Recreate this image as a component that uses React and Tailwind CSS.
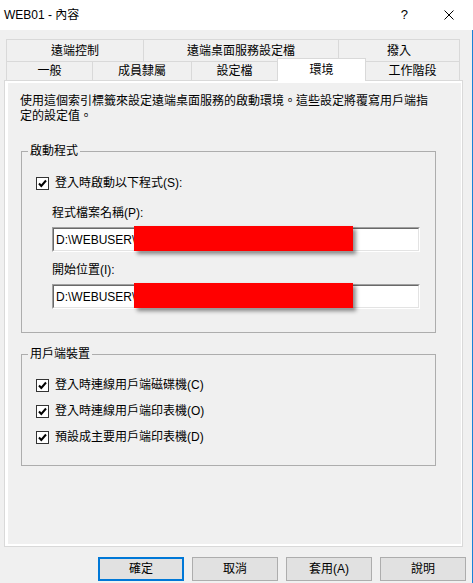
import React from "react";

const FONT = { fontFamily: '"Liberation Sans", "Noto Sans CJK TC", sans-serif' };

const CheckBox = ({ label }) => (
  <div className="flex items-center h-[15px]">
    <div className="w-[13px] h-[13px] border border-[#333333] bg-white flex items-center justify-center">
      <svg width="11" height="11" viewBox="0 0 11 11">
        <path d="M2 5.5 L4.3 8 L9 2.5" fill="none" stroke="#000" strokeWidth="2" />
      </svg>
    </div>
    <span className="ml-[6px] text-[12px] leading-[15px] text-black">{label}</span>
  </div>
);

// 凹陷的輸入框 + 紅色遮蔽區塊
const SunkenInput = ({ value }) => (
  <div className="relative w-[368px] h-[25px] border-t border-l border-[#a0a0a0] border-b-white border-r-white border-b border-r">
    <div className="h-full bg-white border-t border-l border-t-[#696969] border-l-[#696969] border-b border-r border-b-[#e3e3e3] border-r-[#e3e3e3] flex items-center pl-[2px] text-[12px] text-black">
      {value}
    </div>
    <div className="absolute left-[81px] top-[-2px] w-[219px] h-[25px] bg-[#ff0000] shadow-[3px_3px_4px_rgba(0,0,0,0.45)]" />
  </div>
);

const GroupBox = ({ title, className, children }) => (
  <fieldset className={`border border-[#adadad] ml-[13px] w-[415px] ${className}`}>
    <legend className="ml-[6px] px-[2px] text-[12px] leading-[15px] text-black">{title}</legend>
    {children}
  </fieldset>
);

const Btn = ({ label, primary }) => (
  <button
    className={`w-[86px] h-[24px] bg-[#e1e1e1] text-[12px] text-black flex items-center justify-center ${
      primary ? "border-2 border-[#0078d7]" : "border border-[#adadad]"
    }`}
  >
    {label}
  </button>
);

export default function App() {
  const row1 = [
    { name: "遠端控制", w: "w-[137px]" },
    { name: "遠端桌面服務設定檔", w: "w-[195px]" },
    { name: "撥入", w: "w-[122px] border-r" },
  ];

  return (
    <div className="w-[473px] h-[583px] bg-[#f0f0f0] flex flex-col overflow-hidden" style={FONT}>
      {/* 標題列 */}
      <div className="h-[30px] bg-white flex items-center pl-[4px] text-[12px] text-black shrink-0">
        <span>WEB01 - 內容</span>
        <span className="ml-auto mr-[36px] text-[13px]">?</span>
        <svg className="mr-[19px]" width="10" height="10" viewBox="0 0 10 10">
          <path d="M0.5 0.5 L9.5 9.5 M9.5 0.5 L0.5 9.5" stroke="#000" strokeWidth="1" />
        </svg>
      </div>

      <div className="flex-1 flex flex-col border-r border-[#1883d7]">
        {/* 索引標籤 */}
        <div className="ml-[6px] mt-[9px] w-[454px] text-[12px] text-black">
          <div className="flex h-[22px]">
            {row1.map((t) => (
              <div key={t.name} className={`${t.w} border-t border-l border-[#d9d9d9] flex items-center justify-center`}>
                {t.name}
              </div>
            ))}
          </div>
          <div className="flex items-start h-[19px]">
            <div className="w-[86px] h-[19px] border-t border-l border-[#d9d9d9] flex items-center justify-center">一般</div>
            <div className="w-[99px] h-[19px] border-t border-l border-[#d9d9d9] flex items-center justify-center">成員隸屬</div>
            <div className="w-[86px] h-[19px] border-t border-l border-[#d9d9d9] flex items-center justify-center">設定檔</div>
            <div className="relative z-10 w-[89px] h-[23px] -mt-[3px] bg-white border-t border-l border-r border-[#d9d9d9] flex items-start pt-[2px] justify-center">環境</div>
            <div className="w-[94px] h-[19px] border-t border-r border-[#d9d9d9] flex items-center justify-center">工作階段</div>
          </div>
        </div>

        {/* 索引標籤內容 */}
        <div className="ml-[4px] w-[459px] h-[467px] border border-[#d9d9d9] bg-white pl-[3px] pr-[1px] pt-[2px] pb-[2px] flex">
          <div className="flex-1 bg-[#f0f0f0] flex flex-col text-[12px] text-black">
            <p className="mt-[11px] ml-[12px] leading-[15px]">
              使用這個索引標籤來設定遠端桌面服務的啟動環境。這些設定將覆寫用戶端指
              <br />
              定的設定值。
            </p>

            <GroupBox title="啟動程式" className="mt-[20px] pb-[23px]">
              <div className="mt-[17px] pl-[14px]">
                <CheckBox label="登入時啟動以下程式(S):" />
              </div>
              <div className="pl-[30px] flex flex-col">
                <span className="mt-[15px] leading-[15px]">程式檔案名稱(P):</span>
                <div className="mt-[6px]">
                  <SunkenInput value="D:\WEBUSER\" />
                </div>
                <span className="mt-[11px] leading-[15px]">開始位置(I):</span>
                <div className="mt-[6px]">
                  <SunkenInput value="D:\WEBUSER\" />
                </div>
              </div>
            </GroupBox>

            <GroupBox title="用戶端裝置" className="mt-[14px] pb-[20px]">
              <div className="mt-[16px] pl-[14px] flex flex-col gap-[11px]">
                <CheckBox label="登入時連線用戶端磁碟機(C)" />
                <CheckBox label="登入時連線用戶端印表機(O)" />
                <CheckBox label="預設成主要用戶端印表機(D)" />
              </div>
            </GroupBox>
          </div>
        </div>

        {/* 按鈕 */}
        <div className="mt-[10px] flex justify-end gap-[8px] pr-[6px]">
          <Btn label="確定" primary />
          <Btn label="取消" />
          <Btn label="套用(A)" />
          <Btn label="說明" />
        </div>
      </div>
    </div>
  );
}
